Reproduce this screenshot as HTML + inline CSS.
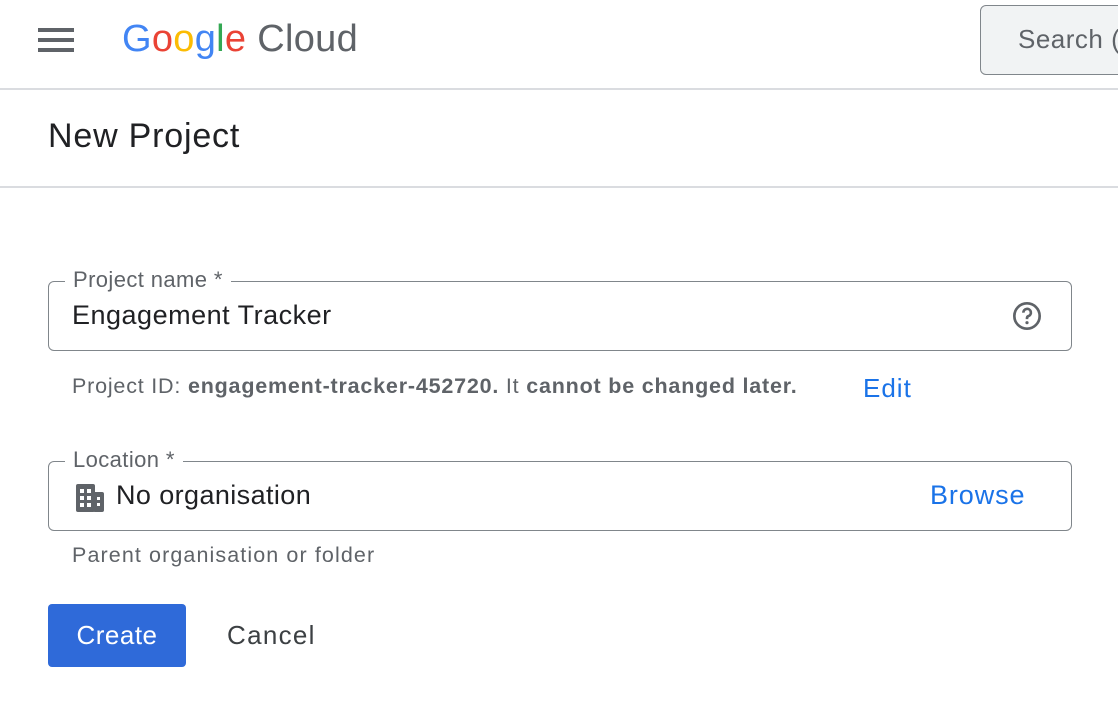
<!DOCTYPE html>
<html><head><meta charset="utf-8"><style>
*{margin:0;padding:0;box-sizing:border-box}
body{width:1118px;height:706px;overflow:hidden;background:#fff;font-family:"Liberation Sans",Arial,sans-serif;color:#202124;position:relative}
.a{position:absolute;white-space:nowrap}
.hb{position:absolute;left:38px;width:36px;height:4px;background:#5f6368}
.field{position:absolute;left:48px;width:1024px;height:70px;border:1.5px solid #80868b;border-radius:6px}
.lab{position:absolute;top:-15px;left:16px;background:#fff;padding:0 8px;font-size:22px;color:#5f6368;line-height:26px;letter-spacing:0.4px}
</style></head><body>
<div class="hb" style="top:28px"></div><div class="hb" style="top:38px"></div><div class="hb" style="top:48px"></div>
<div class="a" style="left:122px;top:18px;font-size:38px;letter-spacing:0.3px"><span style="color:#4285f4">G</span><span style="color:#ea4335">o</span><span style="color:#fbbc04">o</span><span style="color:#4285f4">g</span><span style="color:#34a853">l</span><span style="color:#ea4335">e</span> <span style="color:#5f6368">Cloud</span></div>
<div class="a" style="left:980px;top:5px;width:160px;height:70px;border:1.5px solid #80868b;border-radius:6px;background:#f1f3f4;padding:18px 0 0 37px;font-size:26px;color:#5f6368;letter-spacing:0.5px">Search (</div>
<div class="a" style="left:0;top:88px;width:1118px;height:2px;background:#dadce0"></div>
<div class="a" style="left:48px;top:117px;font-size:34px;color:#202124;letter-spacing:0.8px">New Project</div>
<div class="a" style="left:0;top:186px;width:1118px;height:1.5px;background:#dadce0"></div>
<div class="field" style="top:281px"><div class="lab">Project name *</div>
<div class="a" style="left:23px;top:18px;font-size:27px;letter-spacing:0.5px">Engagement Tracker</div>
<svg class="a" style="left:962px;top:18px" width="32" height="32" viewBox="0 0 24 24"><circle cx="12" cy="12" r="9.5" fill="none" stroke="#5f6368" stroke-width="2"/><path d="M9.3 9.5a2.8 2.8 0 1 1 3.7 2.6c-.7.3-1 .8-1 1.6v.6" fill="none" stroke="#5f6368" stroke-width="2"/><circle cx="12" cy="17" r="1.2" fill="#5f6368"/></svg>
</div>
<div class="a" style="left:72px;top:374px;font-size:21.5px;color:#5f6368;letter-spacing:0.8px">Project ID: <b>engagement-tracker-452720.</b> It <b>cannot be changed later.</b></div>
<div class="a" style="left:863px;top:373px;font-size:26px;color:#1a73e8;letter-spacing:1px">Edit</div>
<div class="field" style="top:461px"><div class="lab">Location *</div>
<svg class="a" style="left:27px;top:22px" width="28" height="28" viewBox="0 0 28 28"><rect x="0" y="0" width="19" height="28" rx="2" fill="#5f6368"/><rect x="17" y="8" width="11" height="20" rx="2" fill="#5f6368"/><g fill="#fff"><rect x="4" y="5" width="4" height="4"/><rect x="11" y="5" width="4" height="4"/><rect x="4" y="12" width="4" height="4"/><rect x="11" y="12" width="4" height="4"/><rect x="4" y="19" width="4" height="4"/><rect x="11" y="19" width="4" height="4"/><rect x="21" y="13" width="3" height="3"/><rect x="21" y="19" width="3" height="3"/></g></svg>
<div class="a" style="left:67px;top:18px;font-size:27px;letter-spacing:0.4px">No organisation</div>
<div class="a" style="left:881px;top:18px;font-size:27px;color:#1a73e8;letter-spacing:0.9px">Browse</div>
</div>
<div class="a" style="left:72px;top:543px;font-size:21.5px;color:#5f6368;letter-spacing:1.1px">Parent organisation or folder</div>
<div class="a" style="left:48px;top:604px;width:138px;height:63px;background:#2f6ad9;border-radius:4px;color:#fff;font-size:26px;text-align:center;line-height:63px;letter-spacing:0.5px">Create</div>
<div class="a" style="left:227px;top:604px;font-size:26px;line-height:63px;color:#3c4043;letter-spacing:1.3px">Cancel</div>
</body></html>
